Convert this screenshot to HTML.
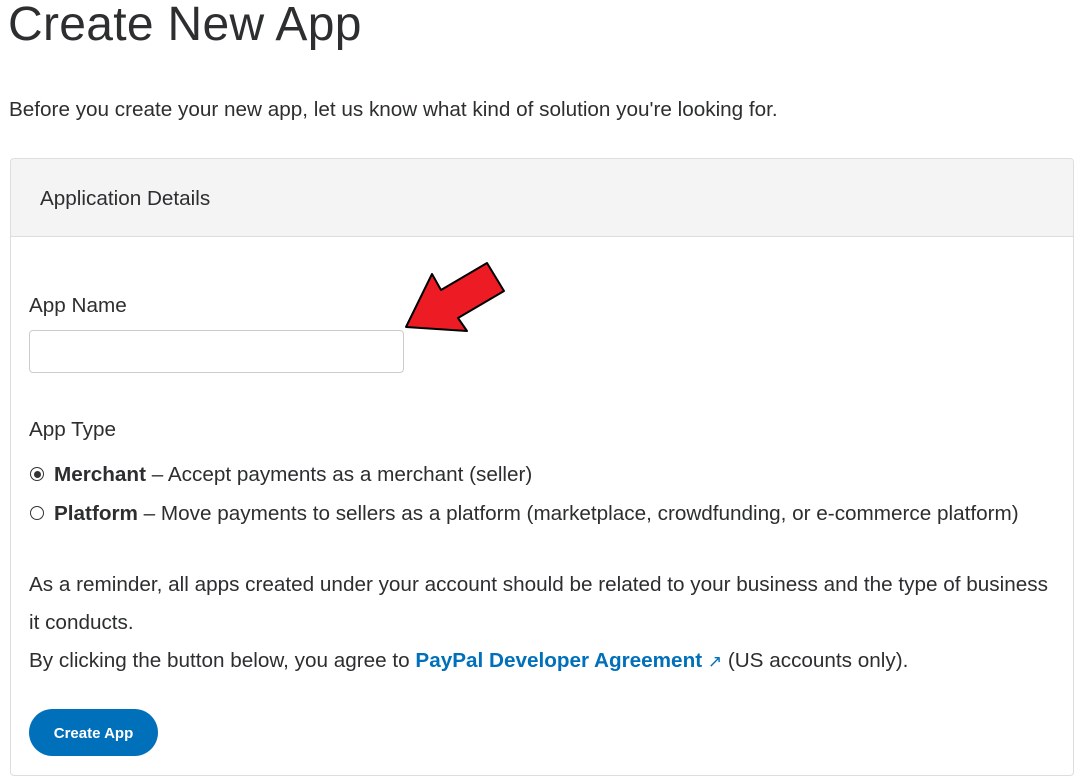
<!DOCTYPE html>
<html><head><meta charset="utf-8"><style>
body{margin:0;width:1082px;height:782px;overflow:hidden;background:#fff;font-family:"Liberation Sans",sans-serif;color:#2c2e2f;position:relative}
.a{position:absolute;white-space:nowrap}
h1{position:absolute;left:8px;top:-3px;margin:0;font-size:48px;font-weight:300;color:#2c2e2f;letter-spacing:0.3px}
.card{position:absolute;left:10px;top:158px;width:1062px;height:616px;border:1px solid #ddd;border-radius:4px}
.hd{position:absolute;left:0;top:0;right:0;height:77px;background:#f4f4f4;border-bottom:1px solid #ddd;border-radius:4px 4px 0 0}
.t{font-size:20.7px}
input{position:absolute;left:29px;top:330px;width:375px;height:43px;box-sizing:border-box;border:1px solid #ccc;border-radius:4px}
.r{position:absolute;width:14px;height:14px;border:1px solid #333;border-radius:50%;box-sizing:border-box}
.btn{position:absolute;left:29px;top:709px;width:129px;height:47px;border-radius:24px;background:#0070ba;color:#fff;font-weight:bold;font-size:15px;text-align:center;line-height:49px}
a{color:#0070ba;font-weight:bold;text-decoration:none}
</style></head><body>
<h1>Create New App</h1>
<div class="a t" style="left:9px;top:98px">Before you create your new app, let us know what kind of solution you're looking for.</div>
<div class="card"><div class="hd"></div></div>
<div class="a t" style="left:40px;top:187px">Application Details</div>
<div class="a t" style="left:29px;top:294px">App Name</div>
<input>
<svg class="a" style="left:0;top:0" width="1082" height="782"><polygon points="406,327 432,274 441,290 487,263 504,291 458,318 467,331" fill="#ed1c24" stroke="#000" stroke-width="2" stroke-linejoin="round"/></svg>
<div class="a t" style="left:29px;top:418px">App Type</div>
<div class="r" style="left:30px;top:467px"><div style="position:absolute;left:2.5px;top:2.5px;width:7px;height:7px;border-radius:50%;background:#333"></div></div>
<div class="a t" style="left:54px;top:463px"><b>Merchant</b> – Accept payments as a merchant (seller)</div>
<div class="r" style="left:30px;top:506px"></div>
<div class="a t" style="left:54px;top:502px"><b>Platform</b> – Move payments to sellers as a platform (marketplace, crowdfunding, or e-commerce platform)</div>
<div class="a t" style="left:29px;top:573px">As a reminder, all apps created under your account should be related to your business and the type of business</div>
<div class="a t" style="left:29px;top:611px">it conducts.</div>
<div class="a t" style="left:29px;top:649px">By clicking the button below, you agree to <a>PayPal Developer Agreement</a> <span style="color:#0070ba;font-size:17px">↗</span> (US accounts only).</div>
<div class="btn">Create App</div>
</body></html>
